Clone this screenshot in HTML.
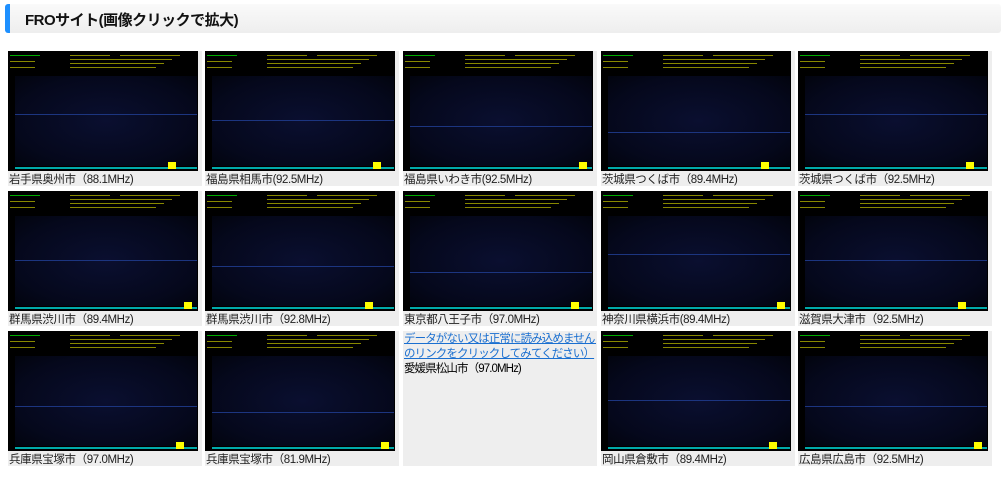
<!DOCTYPE html>
<html><head><meta charset="utf-8"><style>
body{margin:0;width:1001px;height:480px;background:#fff;font-family:"Liberation Sans","Noto Sans CJK JP",sans-serif;overflow:hidden;position:relative}
.hd{position:absolute;left:5px;top:4px;width:996px;height:29px;background:linear-gradient(#fafafa,#eee);border-left:5px solid #1e90ff;border-radius:3px;box-sizing:border-box}
.hd span{position:absolute;left:15px;top:5px;font-size:15px;font-weight:bold;color:#111;letter-spacing:-0.5px}
.c{position:absolute;width:194px;background:#eee}
.im{position:absolute;left:0;top:0;width:190px;height:120px;background:#000;overflow:hidden}
.im .t{position:absolute;left:2px;top:2px;width:186px;height:20px}
.im .t i{position:absolute;height:1px;background:#880;}
.im .p{position:absolute;left:7px;top:25px;width:182px;height:90px;background:radial-gradient(ellipse at 50% 50%,#0a0f30,#05081c 70%,#02040e);}
.im .p b{position:absolute;left:0;right:0;height:1px;background:#1a3070}
.im .g{position:absolute;left:7px;bottom:2px;width:182px;height:2px;background:#0aa}
.im .y{position:absolute;bottom:2px;width:8px;height:7px;background:#ff0}
.cap{position:absolute;left:1px;top:120px;font-size:11.5px;letter-spacing:-0.4px;color:#222;white-space:nowrap}
a{color:#1a6fd0}
</style></head><body>
<div class="hd"><span>FROサイト(画像クリックで拡大)</span></div>
<div id="g"></div>
<script>
var xs=[8,205,403,601,798],ys=[51,191,331];
var caps=["岩手県奥州市（88.1MHz)","福島県相馬市(92.5MHz)","福島県いわき市(92.5MHz)","茨城県つくば市（89.4MHz)","茨城県つくば市（92.5MHz)",
"群馬県渋川市（89.4MHz)","群馬県渋川市（92.8MHz)","東京都八王子市（97.0MHz)","神奈川県横浜市(89.4MHz)","滋賀県大津市（92.5MHz)",
"兵庫県宝塚市（97.0MHz)","兵庫県宝塚市（81.9MHz)","","岡山県倉敷市（89.4MHz)","広島県広島市（92.5MHz)"];
var h="";
for(var r=0;r<3;r++)for(var k=0;k<5;k++){var n=r*5+k,x=xs[k],y=ys[r];
if(n==12){h+='<div class="c" style="left:'+x+'px;top:'+y+'px;height:135px"><div style="position:absolute;left:1px;top:1px;font-size:11.5px;letter-spacing:-0.9px;line-height:15px;width:192px;white-space:nowrap;overflow:hidden"><a href="#">データがない又は正常に読み込めません（こ<br>のリンクをクリックしてみてください）</a><br>愛媛県松山市（97.0MHz)</div></div>';continue;}
var t="";for(var j=0;j<4;j++){t+='<i style="left:60px;top:'+(2+j*4)+'px;width:'+(40+j*10)+'px"></i><i style="left:110px;top:'+(2+j*4)+'px;width:'+(60-j*8)+'px"></i>';}
t+='<i style="left:0;top:2px;width:30px;background:#0a0"></i><i style="left:0;top:8px;width:25px"></i><i style="left:0;top:14px;width:25px"></i>';
var ln='<b style="top:'+(38+(n%4)*6)+'px;background:#1c3580"></b>';
h+='<div class="c" style="left:'+x+'px;top:'+y+'px;height:135px"><div class="im"><div class="t">'+t+'</div><div class="p">'+ln+'</div><div class="g"></div><div class="y" style="left:'+(160+n%3*8)+'px"></div></div><div class="cap">'+caps[n]+'</div></div>';}
document.getElementById("g").innerHTML=h;
</script>
</body></html>
